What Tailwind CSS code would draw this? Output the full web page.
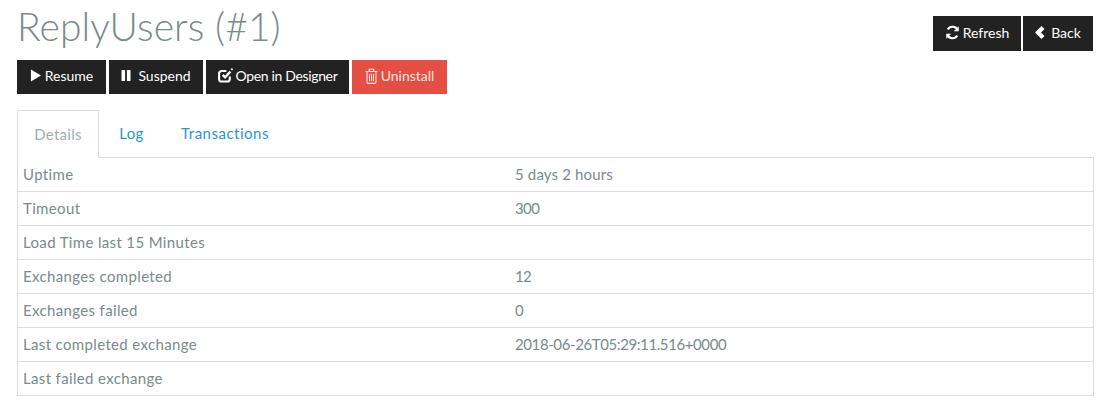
<!DOCTYPE html>
<html lang="en">
<head>
  <meta charset="UTF-8" />
  <title>ReplyUsers (#1)</title>
  <script src="https://cdn.jsdelivr.net/npm/@tailwindcss/browser@4"></script>
</head>
<body class="bg-white text-[#7b8a8b] font-['Lato','Noto_Sans',sans-serif] text-[15px] overflow-hidden">
  <div class="pl-[17px] pr-[15px]">
    <!-- Header -->
    <div class="flex justify-between h-[60px] pr-[1px]">
      <h1 class="font-['Lato',sans-serif] font-light text-[39px] leading-[43px] mt-[5px] tracking-[0.08px] text-[#7b8a8b]">ReplyUsers (#1)</h1>
      <div class="flex gap-[2px] mt-[16px] h-[35px] text-white text-[14px]">
        <button class="w-[88px] bg-[#222] flex items-center justify-center gap-[3px] pb-[2px]">
          <svg class="w-[15px] h-[15px]" viewBox="0 0 14 14" fill="none" stroke="#fff" stroke-width="2"><path d="M12 5.2A5.2 5.2 0 0 0 2.6 4.2M2 8.8a5.2 5.2 0 0 0 9.4 1"/><path d="M12.8 1.2v4.6H8.2z M1.2 12.8V8.2h4.6z" fill="#fff" stroke="none"/></svg>
          Refresh
        </button>
        <button class="w-[70px] bg-[#222] flex items-center justify-center gap-[6px] pb-[2px]">
          <svg class="w-[10px] h-[13px]" viewBox="0 0 10 13" fill="#fff"><path d="M6.5 0 9.5 3 6 6.5 9.5 10 6.5 13 0 6.5z"/></svg>
          Back
        </button>
      </div>
    </div>

    <!-- Actions -->
    <div class="flex gap-[3px] h-[34px] text-white text-[14px]">
      <button class="w-[89px] bg-[#222] flex items-center justify-center gap-[4px] pb-[3px]">
        <svg class="w-[11px] h-[13px]" viewBox="0 0 12 13" fill="#fff"><path d="M1 0 12 6.5 1 13z"/></svg>
        Resume
      </button>
      <button class="w-[94px] bg-[#222] flex items-center justify-center gap-[7px] pb-[3px]">
        <svg class="w-[10px] h-[11px]" viewBox="0 0 10 11" fill="#fff"><rect x="0.5" width="3.6" height="11" rx="0.6"/><rect x="5.9" width="3.6" height="11" rx="0.6"/></svg>
        Suspend
      </button>
      <button class="w-[143px] bg-[#222] flex items-center justify-center gap-[3px] pb-[3px] tracking-[-0.35px]">
        <svg class="w-[15px] h-[15px]" viewBox="0 0 14 14" fill="none" stroke="#fff"><path d="M11 8v2.2a2.4 2.4 0 0 1-2.4 2.4H3.4A2.4 2.4 0 0 1 1 10.2V5.2a2.4 2.4 0 0 1 2.4-2.4h4.4" stroke-width="2"/><path d="M4.4 6.4 6.6 8.6 11.6 3.4" stroke-width="2.2"/><path d="M12.4 0.6 13.6 1.8" stroke-width="1.5"/></svg>
        Open in Designer
      </button>
      <button class="w-[95px] bg-[#e44e43] flex items-center justify-center gap-[3px] pb-[3px] text-[#fbe3e0]">
        <svg class="w-[13px] h-[16px]" viewBox="0 0 13 16" fill="none" stroke="#fbe3e0" stroke-width="1.1"><path d="M0.5 3.5h12M4.2 3.2V1.2h4.6v2M2 3.5v10.7a1.2 1.2 0 0 0 1.2 1.2h6.6a1.2 1.2 0 0 0 1.2-1.2V3.5M4.5 5.8v7.4M6.5 5.8v7.4M8.5 5.8v7.4"/></svg>
        Uninstall
      </button>
    </div>

    <!-- Tabs -->
    <div class="flex h-[48px] mt-[16px] border-b border-[#ddd] text-[#2a95d3]">
      <div class="w-[82px] h-[48px] border border-[#ddd] border-b-white bg-white text-[#9fb0b1] flex items-center justify-center tracking-[0.3px]">Details</div>
      <div class="w-[65px] h-[47px] flex items-center justify-center tracking-[0.4px]">Log</div>
      <div class="w-[122px] h-[47px] flex items-center justify-center tracking-[0.5px]">Transactions</div>
    </div>

    <!-- Details table -->
    <div class="border-x border-[#ddd] tracking-[0.35px]">
      <div class="grid grid-cols-[492px_1fr] h-[34px] items-center border-b border-[#ddd] px-[5px]"><span>Uptime</span><span class="tracking-[0.15px]">5 days 2 hours</span></div>
      <div class="grid grid-cols-[492px_1fr] h-[34px] items-center border-b border-[#ddd] px-[5px]"><span>Timeout</span><span class="tracking-[-0.6px]">300</span></div>
      <div class="grid grid-cols-[492px_1fr] h-[34px] items-center border-b border-[#ddd] px-[5px]"><span>Load Time last 15 Minutes</span><span></span></div>
      <div class="grid grid-cols-[492px_1fr] h-[34px] items-center border-b border-[#ddd] px-[5px]"><span>Exchanges completed</span><span class="tracking-[-0.6px]">12</span></div>
      <div class="grid grid-cols-[492px_1fr] h-[34px] items-center border-b border-[#ddd] px-[5px]"><span>Exchanges failed</span><span class="tracking-[-0.6px]">0</span></div>
      <div class="grid grid-cols-[492px_1fr] h-[34px] items-center border-b border-[#ddd] px-[5px]"><span>Last completed exchange</span><span class="tracking-[-0.4px]">2018-06-26T05:29:11.516+0000</span></div>
      <div class="grid grid-cols-[492px_1fr] h-[34px] items-center border-b border-[#ddd] px-[5px]"><span>Last failed exchange</span><span></span></div>
    </div>
  </div>
</body>
</html>
